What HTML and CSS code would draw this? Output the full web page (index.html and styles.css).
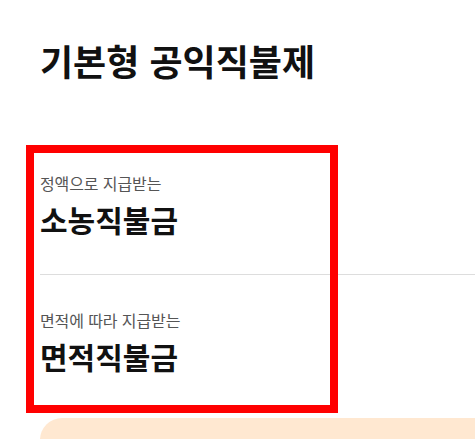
FILE: index.html
```html
<!DOCTYPE html>
<html lang="ko">
<head>
<meta charset="utf-8">
<link rel="stylesheet" href="styles.css">
</head>
<body>
<main class="page">
  <h1 class="title">기본형 공익직불제</h1>
  <section class="list">
    <div class="item">
      <p class="sub">정액으로 지급받는</p>
      <h2 class="name">소농직불금</h2>
    </div>
    <div class="item item-last">
      <p class="sub">면적에 따라 지급받는</p>
      <h2 class="name">면적직불금</h2>
    </div>
    <div class="highlight"></div>
  </section>
  <div class="notice"></div>
</main>
</body>
</html>
```
FILE: styles.css
```css
html, body {
  margin: 0;
  padding: 0;
  background: #fff;
}
body {
  font-family: "Noto Sans CJK KR", "Noto Sans", sans-serif;
  color: #111;
  overflow: hidden;
  height: 439px;
}
.page {
  padding: 34px 0 0 40px;
}
.title {
  margin: 0;
  font-size: 36px;
  font-weight: 700;
  letter-spacing: 0;
  line-height: 52px;
}
.list {
  position: relative;
  margin-top: 52px;
}
.item {
  padding: 35px 0 37px;
  border-bottom: 1px solid #dddddd;
}
.item-last {
  border-bottom: none;
}
.sub {
  margin: 0;
  font-size: 16px;
  color: #555;
  letter-spacing: -0.1px;
  line-height: 20px;
}
.name {
  margin: 8px 0 0;
  font-size: 30px;
  font-weight: 700;
  letter-spacing: 0;
  line-height: 36px;
}
.highlight {
  position: absolute;
  left: -14px;
  top: 7px;
  width: 296px;
  height: 252px;
  border: 8px solid #ff0000;
}
.notice {
  margin-top: 7px;
  height: 80px;
  background: #ffe8d1;
  border-radius: 22px 0 0 0;
}
```
